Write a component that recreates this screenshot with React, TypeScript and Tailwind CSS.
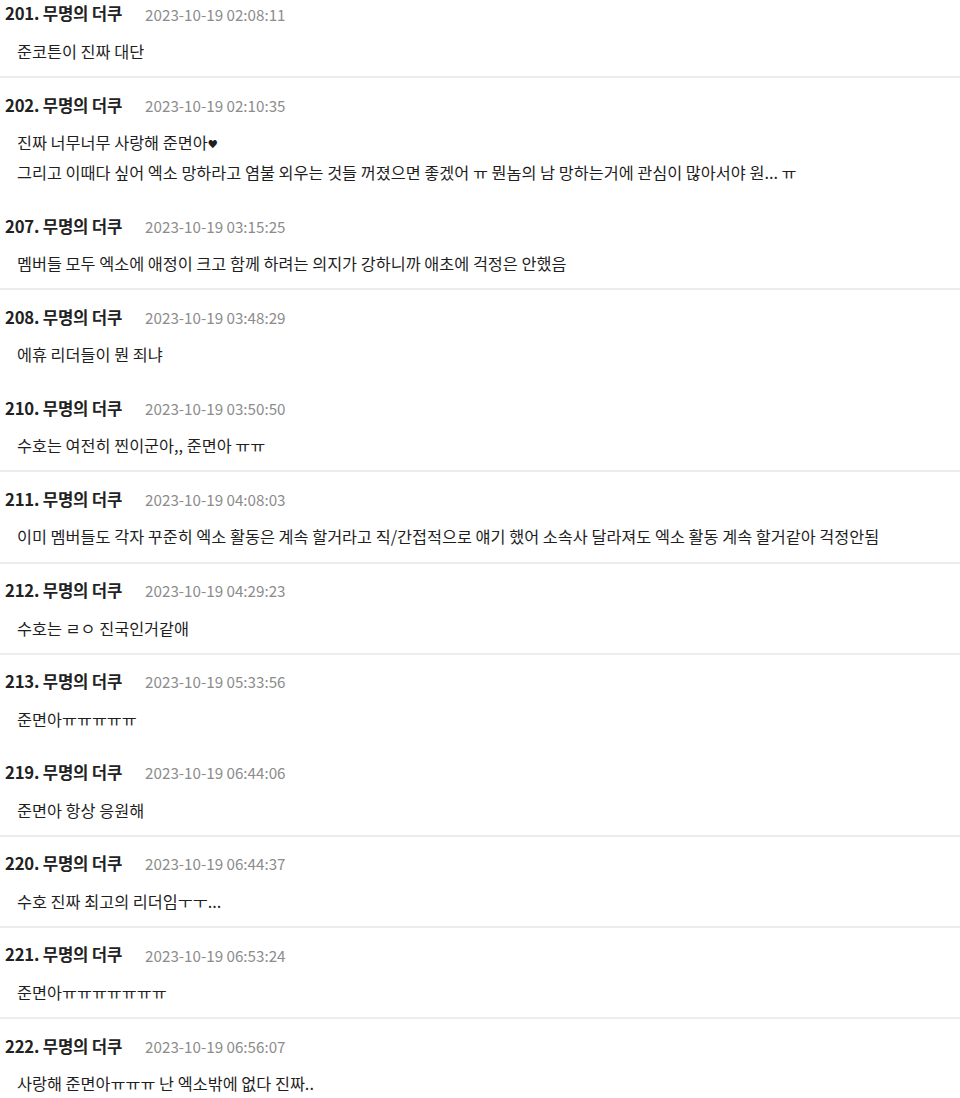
import React from 'react';

type Comment = {
  no: number;
  date: string;
  lines: React.ReactNode[];
  divider: boolean;
};

const comments: Comment[] = [
  { no: 201, date: '2023-10-19 02:08:11', lines: ['준코튼이 진짜 대단'], divider: true },
  {
    no: 202,
    date: '2023-10-19 02:10:35',
    lines: [
      <>
        진짜 너무너무 사랑해 준면아<span className="text-[10px] align-[1px]">♥</span>
      </>,
      '그리고 이때다 싶어 엑소 망하라고 염불 외우는 것들 꺼졌으면 좋겠어 ㅠ 뭔놈의 남 망하는거에 관심이 많아서야 원... ㅠ',
    ],
    divider: false,
  },
  { no: 207, date: '2023-10-19 03:15:25', lines: ['멤버들 모두 엑소에 애정이 크고 함께 하려는 의지가 강하니까 애초에 걱정은 안했음'], divider: true },
  { no: 208, date: '2023-10-19 03:48:29', lines: ['에휴 리더들이 뭔 죄냐'], divider: false },
  { no: 210, date: '2023-10-19 03:50:50', lines: ['수호는 여전히 찐이군아,, 준면아 ㅠㅠ'], divider: true },
  {
    no: 211,
    date: '2023-10-19 04:08:03',
    lines: ['이미 멤버들도 각자 꾸준히 엑소 활동은 계속 할거라고 직/간접적으로 얘기 했어 소속사 달라져도 엑소 활동 계속 할거같아 걱정안됨'],
    divider: true,
  },
  { no: 212, date: '2023-10-19 04:29:23', lines: ['수호는 ㄹㅇ 진국인거같애'], divider: true },
  { no: 213, date: '2023-10-19 05:33:56', lines: ['준면아ㅠㅠㅠㅠㅠ'], divider: false },
  { no: 219, date: '2023-10-19 06:44:06', lines: ['준면아 항상 응원해'], divider: true },
  { no: 220, date: '2023-10-19 06:44:37', lines: ['수호 진짜 최고의 리더임ㅜㅜ...'], divider: true },
  { no: 221, date: '2023-10-19 06:53:24', lines: ['준면아ㅠㅠㅠㅠㅠㅠㅠ'], divider: true },
  { no: 222, date: '2023-10-19 06:56:07', lines: ['사랑해 준면아ㅠㅠㅠ 난 엑소밖에 없다 진짜..'], divider: false },
];

function CommentItem({ c }: { c: Comment }) {
  return (
    <div
      className={
        'pt-[17px] pb-[11.1px] border-b-2 ' + (c.divider ? 'border-[#ececec]' : 'border-transparent')
      }
    >
      <div className="flex items-center h-5 pl-[5px] gap-[23px]">
        <span className="text-[16.7px] font-bold text-[#222222] tracking-[-0.2px]">{c.no}. 무명의 더쿠</span>
        <span className="text-[15.2px] text-[#8c8c8c]">{c.date}</span>
      </div>
      <div className="mt-[13px] pl-[17px] text-[16.3px] leading-[28px] text-[#1f1f1f]">
        {c.lines.map((l, i) => (
          <div key={i}>{l}</div>
        ))}
      </div>
    </div>
  );
}

export default function App() {
  return (
    <div
      className="w-[960px] h-[1098px] overflow-hidden bg-white"
      style={{ fontFamily: '"Noto Sans CJK KR", "Noto Sans", sans-serif' }}
    >
      <div className="-mt-[13px]">
        {comments.map((c) => (
          <CommentItem key={c.no} c={c} />
        ))}
      </div>
    </div>
  );
}
